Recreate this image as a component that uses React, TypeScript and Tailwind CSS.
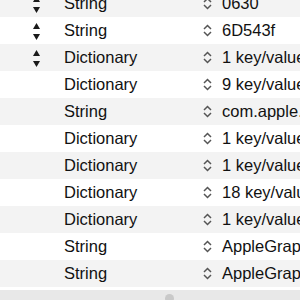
const rows = [
  { type: "String", value: "0630", stepper: true },
  { type: "String", value: "6D543f", stepper: true },
  { type: "Dictionary", value: "1 key/value pair", stepper: true },
  { type: "Dictionary", value: "9 key/value pairs" },
  { type: "String", value: "com.apple.driver" },
  { type: "Dictionary", value: "1 key/value pair" },
  { type: "Dictionary", value: "1 key/value pair" },
  { type: "Dictionary", value: "18 key/value pairs" },
  { type: "Dictionary", value: "1 key/value pair" },
  { type: "String", value: "AppleGraphicsControl" },
  { type: "String", value: "AppleGraphicsPower" },
];

const Stepper = () => (
  <div className="flex flex-col gap-[5px]">
    <svg width="7" height="6" viewBox="0 0 7 6">
      <path d="M3.5 0 L7 6 L0 6 Z" fill="#1a1a1a" />
    </svg>
    <svg width="7" height="6" viewBox="0 0 7 6">
      <path d="M0 0 L7 0 L3.5 6 Z" fill="#1a1a1a" />
    </svg>
  </div>
);

const Chevrons = () => (
  <svg width="9" height="13" viewBox="0 0 9 13">
    <path d="M1 5 L4.5 1.5 L8 5" fill="none" stroke="#555" strokeWidth="1.5" />
    <path d="M1 8 L4.5 11.5 L8 8" fill="none" stroke="#555" strokeWidth="1.5" />
  </svg>
);

export default function App() {
  return (
    <div className="w-[300px] h-[300px] overflow-hidden bg-white font-['Liberation_Sans',Arial,sans-serif] text-[16.5px] text-[#111]">
      <div className="-mt-[10px] flex flex-col">
        {rows.map((r, i) => (
          <div
            key={i}
            className={`flex items-center h-[27px] whitespace-nowrap ${i % 2 === 0 ? "bg-[#f3f3f3]" : "bg-white"}`}
          >
            <div className="w-[64px] shrink-0 pl-[33px] pt-[2px]">{r.stepper && <Stepper />}</div>
            <div className="w-[139px] shrink-0">{r.type}</div>
            <div className="shrink-0 flex items-center">
              <Chevrons />
            </div>
            <div className="ml-[10px]">{r.value}</div>
          </div>
        ))}
      </div>
      <div className="h-[3px] bg-white" />
      <div className="h-[20px] bg-[#e8e8e8] flex">
        <div className="ml-[165px] mt-[4px] w-[9px] h-[9px] rounded-full bg-[#c9c9c9]" />
      </div>
    </div>
  );
}
